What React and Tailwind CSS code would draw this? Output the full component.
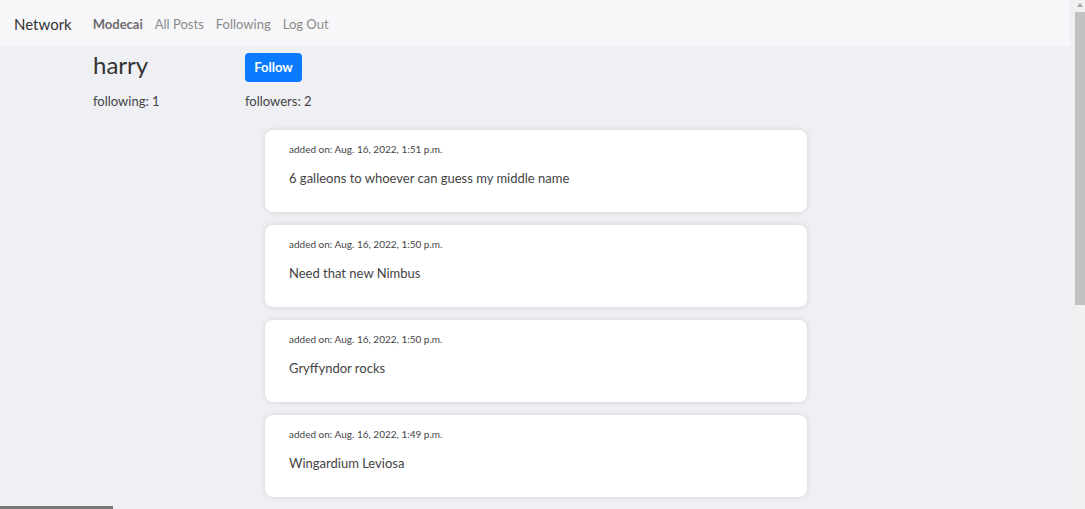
export default function App() {
  const posts = [
    { date: "Aug. 16, 2022, 1:51 p.m.", text: "6 galleons to whoever can guess my middle name" },
    { date: "Aug. 16, 2022, 1:50 p.m.", text: "Need that new Nimbus" },
    { date: "Aug. 16, 2022, 1:50 p.m.", text: "Gryffyndor rocks" },
    { date: "Aug. 16, 2022, 1:49 p.m.", text: "Wingardium Leviosa" },
  ];
  return (
    <div
      className="relative flex h-[509px] w-[1085px] overflow-hidden bg-[#eff0f4] text-[#333]"
      style={{ fontFamily: "Lato, 'Open Sans', sans-serif" }}
    >
      <div className="flex-1 min-w-0">
        <nav className="flex h-[46px] items-center bg-[#f7f7fa] pl-[14px] pt-[3px] mr-[5px]">
          <span className="text-[15px] text-[#333] mr-[21px]">Network</span>
          <div className="flex gap-[12px] text-[13px] text-[#8a8a8a]">
            <span className="font-bold text-[#6d6d6d]">Modecai</span>
            <span>All Posts</span>
            <span>Following</span>
            <span>Log Out</span>
          </div>
        </nav>
        <div className="flex pl-[93px] pt-[7px]">
          <div className="w-[152px]">
            <div className="h-[29px] flex items-center pb-[5px] text-[24px] text-[#333]">harry</div>
            <div className="mt-[10px] text-[13px] text-[#444]">following: 1</div>
          </div>
          <div>
            <button className="h-[29px] w-[57px] rounded-[4px] bg-[#0a7bff] text-[13px] font-bold text-white">
              Follow
            </button>
            <div className="mt-[10px] text-[13px] text-[#444]">followers: 2</div>
          </div>
        </div>
        <div className="mt-[18px] flex flex-col gap-[13px] pl-[265px]">
          {posts.map((p, i) => (
            <div
              key={i}
              className="h-[82px] w-[542px] rounded-[8px] bg-white px-[24px] pt-[12px] shadow-[0_0_6px_rgba(0,0,0,0.12)]"
            >
              <div className="text-[10px] text-[#444]">added on: {p.date}</div>
              <div className="mt-[12px] text-[13px] text-[#444]">{p.text}</div>
            </div>
          ))}
        </div>
      </div>
      <div className="relative w-[10px] bg-[#f1f1f1]">
        <div className="mx-auto mt-[3px] h-0 w-0 border-x-[3px] border-b-[4px] border-x-transparent border-b-[#a3a3a3]" />
        <div className="mt-[5px] h-[293px] w-[10px] bg-[#c1c1c1]" />
      </div>
      <div className="absolute bottom-0 left-0 h-[3px] w-[113px] bg-[#7a7a7a]" />
    </div>
  );
}
